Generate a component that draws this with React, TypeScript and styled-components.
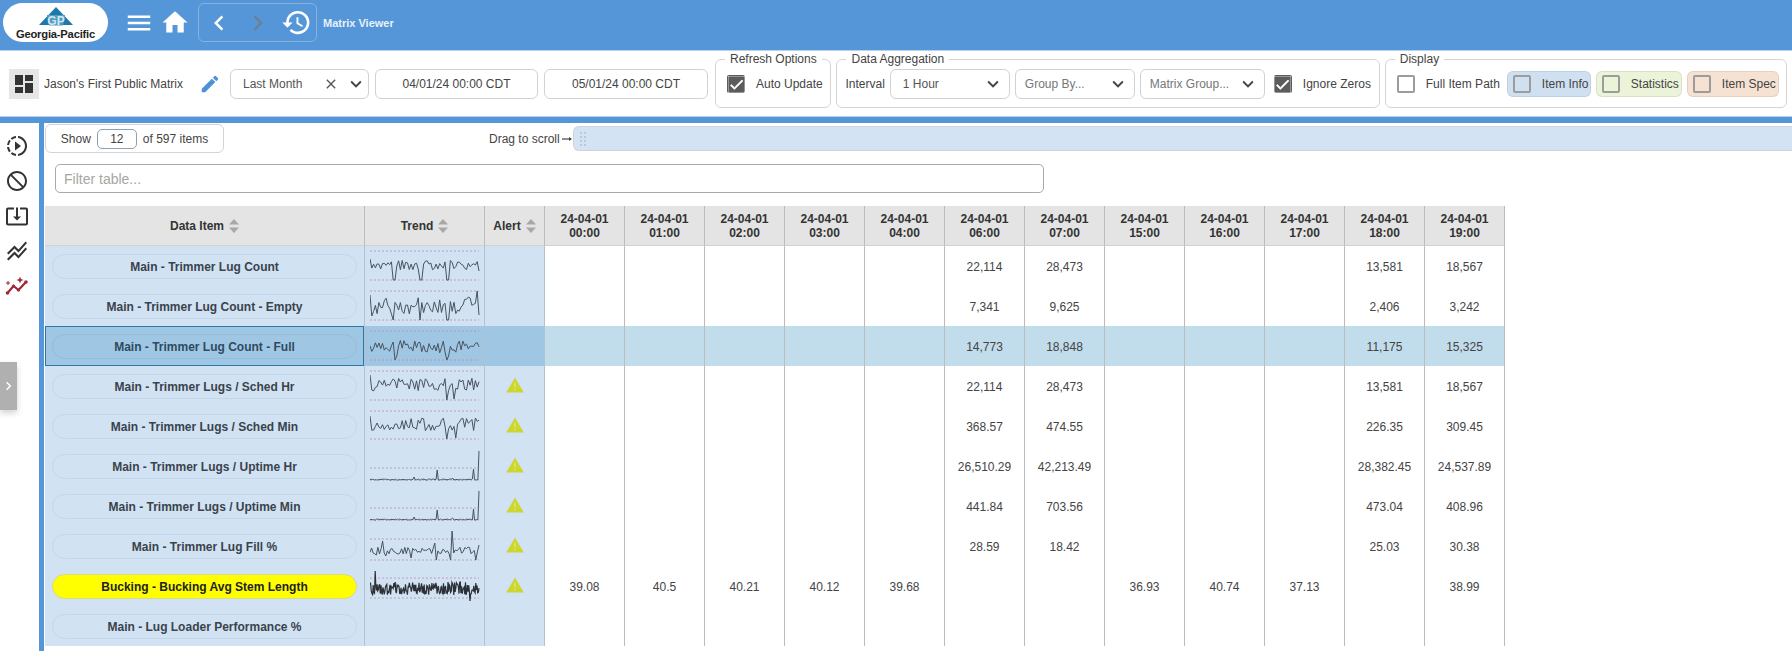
import styled, { createGlobalStyle } from 'styled-components';
import {
  MdCheck,
  MdChevronLeft,
  MdChevronRight,
  MdClose,
  MdDashboard,
  MdDoNotDisturb,
  MdEdit,
  MdHistory,
  MdHome,
  MdKeyboardArrowDown,
  MdMenu,
  MdSlowMotionVideo,
  MdStackedLineChart,
  MdSystemUpdateAlt,
} from 'react-icons/md';

interface SparkSpec {
  seed: number;
  count: number;
  lo: number;
  hi: number;
  dashes: [number, number];
  marks: [number, number][];
  heavy?: boolean;
}

interface RowData {
  name: string;
  alert?: boolean;
  selected?: boolean;
  highlight?: boolean;
  spark?: SparkSpec;
  values: string[];
}

const HOURS = ['00:00', '01:00', '02:00', '03:00', '04:00', '06:00', '07:00', '15:00', '16:00', '17:00', '18:00', '19:00'];

// values only exist for some hours, so this fills the rest of the row
const mostly = (a: string, b: string, c: string, d: string) => ['', '', '', '', '', a, b, '', '', '', c, d];

const ROWS: RowData[] = [
  {
    name: 'Main - Trimmer Lug Count',
    spark: { seed: 11, count: 62, lo: 14, hi: 24, dashes: [5, 34], marks: [[0, 13], [0.22, 34], [0.23, 34], [0.46, 34], [0.47, 34], [0.7, 34], [0.71, 34], [0.72, 34], [1, 25]] },
    values: mostly('22,114', '28,473', '13,581', '18,567'),
  },
  {
    name: 'Main - Trimmer Lug Count - Empty',
    spark: { seed: 29, count: 62, lo: 11, hi: 28, dashes: [5, 34], marks: [[0, 9], [0.01, 30], [0.22, 34], [0.46, 34], [0.7, 34], [0.72, 34], [0.99, 5], [1, 29]] },
    values: mostly('7,341', '9,625', '2,406', '3,242'),
  },
  {
    name: 'Main - Trimmer Lug Count - Full',
    selected: true,
    spark: { seed: 47, count: 62, lo: 14, hi: 27, dashes: [5, 34], marks: [[0.23, 34], [0.24, 30], [0.71, 34], [0.72, 30]] },
    values: mostly('14,773', '18,848', '11,175', '15,325'),
  },
  {
    name: 'Main - Trimmer Lugs / Sched Hr',
    alert: true,
    spark: { seed: 71, count: 62, lo: 12, hi: 25, dashes: [5, 34], marks: [[0, 9], [0.02, 24], [0.71, 34], [0.77, 33]] },
    values: mostly('22,114', '28,473', '13,581', '18,567'),
  },
  {
    name: 'Main - Trimmer Lugs / Sched Min',
    alert: true,
    spark: { seed: 83, count: 62, lo: 12, hi: 25, dashes: [5, 33], marks: [[0, 10], [0.03, 24], [0.71, 33], [0.78, 32]] },
    values: mostly('368.57', '474.55', '226.35', '309.45'),
  },
  {
    name: 'Main - Trimmer Lugs / Uptime Hr',
    alert: true,
    spark: { seed: 101, count: 100, lo: 33, hi: 34, dashes: [22, 34], marks: [[0.4, 31], [0.62, 24], [0.63, 34], [0.76, 32], [0.95, 23], [0.97, 34], [1, 5]] },
    values: mostly('26,510.29', '42,213.49', '28,382.45', '24,537.89'),
  },
  {
    name: 'Main - Trimmer Lugs / Uptime Min',
    alert: true,
    spark: { seed: 131, count: 100, lo: 33, hi: 34, dashes: [22, 34], marks: [[0.4, 31], [0.62, 24], [0.63, 34], [0.76, 32], [0.95, 23], [0.97, 34], [1, 5]] },
    values: mostly('441.84', '703.56', '473.04', '408.96'),
  },
  {
    name: 'Main - Trimmer Lug Fill %',
    alert: true,
    spark: { seed: 151, count: 70, lo: 21, hi: 28, dashes: [13, 34], marks: [[0.06, 29], [0.12, 15], [0.14, 30], [0.38, 32], [0.61, 34], [0.6, 17], [0.74, 34], [0.76, 5], [0.78, 24], [0.97, 34], [1, 19]] },
    values: mostly('28.59', '18.42', '25.03', '30.38'),
  },
  {
    name: 'Bucking - Bucking Avg Stem Length',
    alert: true,
    highlight: true,
    spark: { seed: 173, count: 170, lo: 16, hi: 29, heavy: true, dashes: [12, 32], marks: [[0.05, 5], [0.92, 35]] },
    values: ['39.08', '40.5', '40.21', '40.12', '39.68', '', '', '36.93', '40.74', '37.13', '', '38.99'],
  },
  {
    name: 'Main - Lug Loader Performance %',
    values: Array(12).fill(''),
  },
];

const sparkPoints = ({ seed, count, lo, hi, marks }: SparkSpec) => {
  let state = seed * 7919;
  const ys = Array.from({ length: count }, () => {
    state = (state * 16807) % 2147483647;
    return lo + ((state % 1000) / 1000) * (hi - lo);
  });
  marks.forEach(([at, y]) => {
    ys[Math.round(at * (count - 1))] = y;
  });
  return ys.map((y, i) => `${((i / (count - 1)) * 109).toFixed(1)},${y.toFixed(1)}`).join(' ');
};

const Spark = ({ spec }: { spec: SparkSpec }) => (
  <SparkSvg width="110" height="40" viewBox="0 0 110 40">
    {spec.dashes.map((y) => (
      <line key={y} x1="0" x2="109" y1={y} y2={y} stroke="#c08aa8" strokeWidth="0.8" strokeDasharray="2 2" />
    ))}
    <polyline
      points={sparkPoints(spec)}
      fill="none"
      stroke={spec.heavy ? '#2c3036' : '#49535e'}
      strokeWidth={spec.heavy ? 1.2 : 1}
    />
  </SparkSvg>
);

const SortArrows = () => (
  <SortSvg width="10" height="14" viewBox="0 0 10 14">
    <path d="M5 0 L10 5.5 H0 Z" fill="#a8a8a8" />
    <path d="M5 14 L10 8.5 H0 Z" fill="#a8a8a8" />
  </SortSvg>
);

const AlertIcon = () => (
  <svg width="18" height="16" viewBox="0 0 18 16">
    <path d="M9 0.5 L17.8 15.5 H0.2 Z" fill="#cdd52f" />
    <rect x="8.3" y="5.5" width="1.4" height="5" fill="#dfe47a" />
    <rect x="8.3" y="11.7" width="1.4" height="1.6" fill="#dfe47a" />
  </svg>
);

const TrendSparkleIcon = () => (
  <svg width="24" height="20" viewBox="0 0 24 20">
    <polyline points="2.5,17 8.5,10 13.5,14 21,6" fill="none" stroke="#9c2a3a" strokeWidth="2.2" />
    <circle cx="2.5" cy="17" r="1.8" fill="#9c2a3a" />
    <circle cx="8.5" cy="10" r="1.6" fill="#9c2a3a" />
    <circle cx="13.5" cy="14" r="1.6" fill="#9c2a3a" />
    <circle cx="21" cy="6" r="1.8" fill="#9c2a3a" />
    <path d="M3 5 V9 M1 7 H5" stroke="#9c2a3a" strokeWidth="1" />
    <path d="M15 0.5 L16 3 L18.5 4 L16 5 L15 7.5 L14 5 L11.5 4 L14 3 Z" fill="#9c2a3a" />
  </svg>
);

const App = () => {
  return (
    <Page>
      <GlobalStyle />
      <TopBar>
        <Logo>
          <svg width="36" height="20" viewBox="0 0 36 20">
            <path d="M18 0 L35 18 H1 Z" fill="#1b7aa9" />
            <path d="M9 8 H27 L25 18.5 H11 Z" fill="#4f9cc4" />
            <text x="18" y="18" textAnchor="middle" fontSize="12" fontWeight="700" fill="#d4e6f1" fontFamily="Liberation Sans">
              GP
            </text>
          </svg>
          <LogoName>Georgia-Pacific</LogoName>
        </Logo>
        <TopIcon $gap={6}>
          <MdMenu size={32} />
        </TopIcon>
        <TopIcon $gap={8}>
          <MdHome size={31} />
        </TopIcon>
        <NavBox>
          <NavButton>
            <MdChevronLeft size={30} />
          </NavButton>
          <NavButton $off>
            <MdChevronRight size={30} />
          </NavButton>
          <NavButton>
            <MdHistory size={31} />
          </NavButton>
        </NavBox>
        <ViewName>Matrix Viewer</ViewName>
      </TopBar>

      <Toolbar>
        <MatrixGroup>
          <MatrixIcon>
            <MdDashboard size={24} />
          </MatrixIcon>
          <MatrixName>Jason's First Public Matrix</MatrixName>
          <EditIcon>
            <MdEdit size={22} />
          </EditIcon>
          <Field $width={139} $right={1}>
            <FieldText>Last Month</FieldText>
            <ClearGap>
              <MdClose size={16} color="#555" />
            </ClearGap>
            <MdKeyboardArrowDown size={22} color="#444" />
          </Field>
          <DateField $width={163}>04/01/24 00:00 CDT</DateField>
          <DateField $width={164}>05/01/24 00:00 CDT</DateField>
        </MatrixGroup>

        <Group>
          <GroupTitle>Refresh Options</GroupTitle>
          <GroupRow $left={11}>
            <CheckBox $checked>
              <MdCheck size={17} />
            </CheckBox>
            <CheckLabel>Auto Update</CheckLabel>
          </GroupRow>
        </Group>

        <Group>
          <GroupTitle>Data Aggregation</GroupTitle>
          <GroupRow $left={8} $right={9}>
            <PlainLabel>Interval</PlainLabel>
            <Field $width={120}>
              <FieldText>1 Hour</FieldText>
              <MdKeyboardArrowDown size={22} color="#444" />
            </Field>
            <Field $width={120} $left={9}>
              <FieldText $muted>Group By...</FieldText>
              <MdKeyboardArrowDown size={22} color="#444" />
            </Field>
            <Field $width={125} $left={9}>
              <FieldText $muted>Matrix Group...</FieldText>
              <MdKeyboardArrowDown size={22} color="#444" />
            </Field>
            <CheckBox $checked $lead={4}>
              <MdCheck size={17} />
            </CheckBox>
            <CheckLabel>Ignore Zeros</CheckLabel>
          </GroupRow>
        </Group>

        <Group>
          <GroupTitle>Display</GroupTitle>
          <GroupRow $left={11}>
            <CheckBox />
            <CheckLabel>Full Item Path</CheckLabel>
            <Chip $bg="#cfe0f0" $width={84}>
              <CheckBox />
              <CheckLabel>Item Info</CheckLabel>
            </Chip>
            <Chip $bg="#ebf3d8" $width={86}>
              <CheckBox />
              <CheckLabel>Statistics</CheckLabel>
            </Chip>
            <Chip $bg="#f5e2d2" $width={92}>
              <CheckBox />
              <CheckLabel>Item Spec</CheckLabel>
            </Chip>
          </GroupRow>
        </Group>
      </Toolbar>

      <Body>
        <SideBar>
          <SideIcon>
            <MdSlowMotionVideo size={24} />
          </SideIcon>
          <SideIcon>
            <MdDoNotDisturb size={24} />
          </SideIcon>
          <SideIcon>
            <MdSystemUpdateAlt size={24} />
          </SideIcon>
          <SideIcon>
            <MdStackedLineChart size={24} />
          </SideIcon>
          <SideIcon>
            <TrendSparkleIcon />
          </SideIcon>
          <ExpandTab>
            <MdChevronRight size={20} />
          </ExpandTab>
        </SideBar>

        <Content>
          <TopRow>
            <ShowBox>
              Show
              <ShowInput value="12" readOnly />
              of 597 items
            </ShowBox>
            <DragLabel>
              Drag to scroll
              <svg width="10" height="6" viewBox="0 0 10 6">
                <path d="M0 3 H9" stroke="#444" strokeWidth="1.2" />
                <path d="M7 1 L10 3 L7 5 Z" fill="#444" />
              </svg>
            </DragLabel>
            <ScrollTrack>
              <ScrollGrip />
            </ScrollTrack>
          </TopRow>

          <FilterInput placeholder="Filter table..." />

          <Table>
            <colgroup>
              <col width="320" />
              <col width="120" />
              <col width="60" />
              {HOURS.map((h) => (
                <col key={h} width="80" />
              ))}
            </colgroup>
            <thead>
              <tr>
                <HeadCell>
                  Data Item
                  <SortArrows />
                </HeadCell>
                <HeadCell>
                  Trend
                  <SortArrows />
                </HeadCell>
                <HeadCell>
                  Alert
                  <SortArrows />
                </HeadCell>
                {HOURS.map((h) => (
                  <HeadCell key={h}>
                    24-04-01
                    <br />
                    {h}
                  </HeadCell>
                ))}
              </tr>
            </thead>
            <tbody>
              {ROWS.map((row) => (
                <tr key={row.name}>
                  <InfoCell $selected={row.selected} $outlined={row.selected}>
                    <ItemPill $highlight={row.highlight} $selected={row.selected}>
                      {row.name}
                    </ItemPill>
                  </InfoCell>
                  <InfoCell $selected={row.selected}>{row.spark && <Spark spec={row.spark} />}</InfoCell>
                  <InfoCell $selected={row.selected}>{row.alert && <AlertIcon />}</InfoCell>
                  {row.values.map((value, i) => (
                    <ValueCell key={i} $selected={row.selected}>
                      {value}
                    </ValueCell>
                  ))}
                </tr>
              ))}
            </tbody>
          </Table>
        </Content>
      </Body>
    </Page>
  );
};

export default App;

const GlobalStyle = createGlobalStyle`
  html, body {
    margin: 0;
    padding: 0;
    background: #fff;
  }
  body {
    font-family: "Liberation Sans", Arial, sans-serif;
    font-size: 12px;
    color: #444;
  }
`;

const Page = styled.div`
  width: 1792px;
  height: 651px;
  overflow: hidden;
  display: flex;
  flex-direction: column;
  background: #5596d8;
`;

const TopBar = styled.header`
  height: 50px;
  flex: none;
  display: flex;
  align-items: center;
  padding-left: 3px;
  padding-bottom: 5px;
  box-sizing: border-box;
`;

const Logo = styled.div`
  width: 105px;
  height: 39px;
  background: #fff;
  border-radius: 20px;
  display: flex;
  flex-direction: column;
  align-items: center;
  padding-top: 4px;
  box-sizing: border-box;
  margin-right: 16px;
`;

const LogoName = styled.span`
  font-size: 11.2px;
  line-height: 12px;
  font-weight: 700;
  color: #222;
  letter-spacing: -0.2px;
  margin-top: 1px;
`;

const TopIcon = styled.div<{ $gap: number }>`
  width: 30px;
  height: 32px;
  margin-right: ${(p) => p.$gap}px;
  color: #fff;
  display: flex;
  align-items: center;
  justify-content: center;
`;

const NavBox = styled.div`
  width: 119px;
  height: 39px;
  box-sizing: border-box;
  border: 1px solid #86b2e0;
  border-radius: 6px;
  display: flex;
  align-items: center;
  margin-right: 6px;
`;

const NavButton = styled.div<{ $off?: boolean }>`
  flex: 1;
  display: flex;
  justify-content: center;
  color: ${(p) => (p.$off ? '#6c7f93' : '#fff')};
`;

const ViewName = styled.span`
  font-size: 11px;
  color: #e8f1fa;
  font-weight: 700;
`;

const Toolbar = styled.section`
  height: 67px;
  flex: none;
  box-sizing: border-box;
  background: #fff;
  border-top: 1px solid #b8d2ea;
  border-bottom: 1px solid #b8d2ea;
  display: flex;
  align-items: flex-start;
  padding: 1px 0 0 9px;
`;

const MatrixGroup = styled.div`
  display: flex;
  align-items: center;
  margin-top: 17px;
  margin-right: 7px;
`;

const MatrixIcon = styled.div`
  width: 30px;
  height: 30px;
  background: #e6e6e6;
  color: #333;
  display: flex;
  align-items: center;
  justify-content: center;
  margin-right: 5px;
`;

const MatrixName = styled.span`
  width: 155px;
  font-size: 12px;
  color: #444;
`;

const EditIcon = styled.div`
  width: 31px;
  color: #4f91d6;
  display: flex;
`;

const Field = styled.div<{ $width: number; $left?: number; $right?: number }>`
  width: ${(p) => p.$width}px;
  height: 30px;
  box-sizing: border-box;
  border: 1px solid #d2d2d2;
  border-radius: 6px;
  background: #fff;
  display: flex;
  align-items: center;
  gap: 5px;
  padding: 0 ${(p) => p.$right ?? 5}px 0 ${(p) => p.$left ?? 12}px;
  flex: none;
`;

const FieldText = styled.span<{ $muted?: boolean }>`
  flex: 1;
  white-space: nowrap;
  color: ${(p) => (p.$muted ? '#777' : '#555')};
`;

const ClearGap = styled.span`
  display: flex;
  margin-right: 1px;
`;

const DateField = styled.div<{ $width: number }>`
  width: ${(p) => p.$width}px;
  height: 30px;
  box-sizing: border-box;
  border: 1px solid #d2d2d2;
  border-radius: 6px;
  margin-left: 6px;
  display: flex;
  align-items: center;
  justify-content: center;
  color: #444;
`;

const Group = styled.fieldset`
  margin: 0 5px 0 0;
  padding: 0;
  min-width: 0;
  border: 1px solid #d4d4d4;
  border-radius: 6px;
`;

const GroupTitle = styled.legend`
  margin-left: 9px;
  padding: 0 5px;
  font-size: 12px;
  line-height: 14px;
  color: #444;
`;

const GroupRow = styled.div<{ $left: number; $right?: number }>`
  display: flex;
  align-items: center;
  gap: 5px;
  height: 30px;
  padding: 3px ${(p) => p.$right ?? 8}px 8px ${(p) => p.$left}px;
`;

const CheckBox = styled.span<{ $checked?: boolean; $lead?: number }>`
  width: 18px;
  height: 18px;
  flex: none;
  box-sizing: border-box;
  margin-left: ${(p) => p.$lead ?? 0}px;
  border-radius: 2px;
  border: ${(p) => (p.$checked ? '0' : '2px solid #9c9c9c')};
  background: ${(p) => (p.$checked ? '#5c5c5c' : 'transparent')};
  color: #fff;
  display: flex;
  align-items: center;
  justify-content: center;
  svg {
    stroke: #fff;
    stroke-width: 1px;
  }
`;

const CheckLabel = styled.span`
  margin-left: 6px;
  white-space: nowrap;
  color: #444;
`;

const PlainLabel = styled.span`
  color: #444;
`;

const Chip = styled.div<{ $bg: string; $width: number }>`
  width: ${(p) => p.$width}px;
  height: 26px;
  box-sizing: border-box;
  flex: none;
  background: ${(p) => p.$bg};
  border: 1px solid rgba(0, 0, 0, 0.07);
  border-radius: 6px;
  padding-left: 5px;
  display: flex;
  align-items: center;
  gap: 5px;
  &:first-of-type {
    margin-left: 2px;
  }
`;

const Body = styled.div`
  flex: 1;
  min-height: 0;
  display: flex;
  margin-top: 6px;
  background: #fff;
`;

const SideBar = styled.aside`
  width: 39px;
  flex: none;
  box-sizing: border-box;
  background: #fff;
  display: flex;
  flex-direction: column;
  padding-top: 5px;
`;

const SideIcon = styled.div`
  height: 35px;
  display: flex;
  justify-content: center;
  align-items: center;
  padding-right: 5px;
  color: #333;
`;

const ExpandTab = styled.div`
  width: 17px;
  height: 48px;
  margin-top: 59px;
  background: #b0b0b0;
  color: #fff;
  display: flex;
  align-items: center;
  justify-content: center;
  box-shadow: 0 3px 6px rgba(0, 0, 0, 0.18);
`;

const Content = styled.main`
  flex: 1;
  min-width: 0;
  border-left: 5px solid #5596d8;
  padding: 1px 0 0 1px;
`;

const TopRow = styled.div`
  display: flex;
  align-items: center;
  height: 29px;
`;

const ShowBox = styled.div`
  width: 179px;
  height: 29px;
  flex: none;
  box-sizing: border-box;
  border: 1px solid #d4d4d4;
  border-radius: 6px;
  display: flex;
  align-items: center;
  justify-content: center;
  gap: 6px;
`;

const ShowInput = styled.input`
  width: 40px;
  height: 20px;
  box-sizing: border-box;
  border: 1px solid #8fa0ae;
  border-radius: 5px;
  text-align: center;
  font: 12px 'Liberation Sans', Arial, sans-serif;
  color: #444;
  padding: 0;
`;

const DragLabel = styled.div`
  margin-left: 265px;
  width: 84px;
  flex: none;
  display: flex;
  align-items: center;
  gap: 2px;
  color: #444;
  white-space: nowrap;
`;

const ScrollTrack = styled.div`
  flex: 1;
  height: 25px;
  box-sizing: border-box;
  background: #d3e3f3;
  border-top: 1px solid #d0d3d8;
  border-bottom: 1px solid #d0d3d8;
  border-left: 1px solid #d0d3d8;
  border-radius: 6px 0 0 6px;
  display: flex;
  align-items: center;
  padding-left: 5px;
`;

const ScrollGrip = styled.div`
  width: 8px;
  height: 16px;
  background-image: radial-gradient(circle, #b9c9d9 1px, transparent 1.2px);
  background-size: 4px 4px;
`;

const FilterInput = styled.input`
  display: block;
  width: 989px;
  height: 29px;
  box-sizing: border-box;
  margin: 11px 0 13px 10px;
  padding: 0 8px;
  border: 1px solid #aaa;
  border-radius: 5px;
  font: 14px 'Liberation Sans', Arial, sans-serif;
  color: #444;
  &::placeholder {
    color: #a6a6a6;
  }
`;

const Table = styled.table`
  width: 1460px;
  table-layout: fixed;
  border-collapse: separate;
  border-spacing: 0;
`;

const HeadCell = styled.th`
  height: 40px;
  padding: 1px 0 0;
  box-sizing: border-box;
  background: #e4e4e4;
  border-right: 1px solid #bcbcbc;
  border-bottom: 1px solid #d2d2d2;
  font-size: 12px;
  line-height: 14px;
  font-weight: 700;
  color: #333;
  text-align: center;
  vertical-align: middle;
`;

const SortSvg = styled.svg`
  margin-left: 5px;
  vertical-align: middle;
`;

const InfoCell = styled.td<{ $selected?: boolean; $outlined?: boolean }>`
  height: 40px;
  padding: 0;
  box-sizing: border-box;
  text-align: center;
  vertical-align: middle;
  background: ${(p) => (p.$selected ? '#9fc7e3' : '#d1e2f3')};
  border-right: 1px solid #b4c2cf;
  box-shadow: ${(p) => (p.$outlined ? 'inset 0 0 0 1px #2a78a8' : 'none')};
`;

const ItemPill = styled.div<{ $highlight?: boolean; $selected?: boolean }>`
  width: 305px;
  height: 25px;
  margin-left: 7px;
  box-sizing: border-box;
  border-radius: 13px;
  border: 1px solid ${(p) => (p.$highlight ? '#d9d98a' : p.$selected ? '#95bcd8' : '#c4d7ea')};
  background: ${(p) => (p.$highlight ? '#ffff00' : 'transparent')};
  color: ${(p) => (p.$highlight ? '#222' : p.$selected ? '#2f4a60' : '#3a424c')};
  font-size: 12px;
  font-weight: 700;
  line-height: 24px;
  text-align: center;
`;

const SparkSvg = styled.svg`
  display: block;
  margin-left: 5px;
`;

const ValueCell = styled.td<{ $selected?: boolean }>`
  height: 40px;
  padding: 2px 0 0;
  box-sizing: border-box;
  background: ${(p) => (p.$selected ? '#c1dceb' : '#fff')};
  border-right: 1px solid #bcbcbc;
  color: #444;
  font-size: 12px;
  text-align: center;
  vertical-align: middle;
`;
